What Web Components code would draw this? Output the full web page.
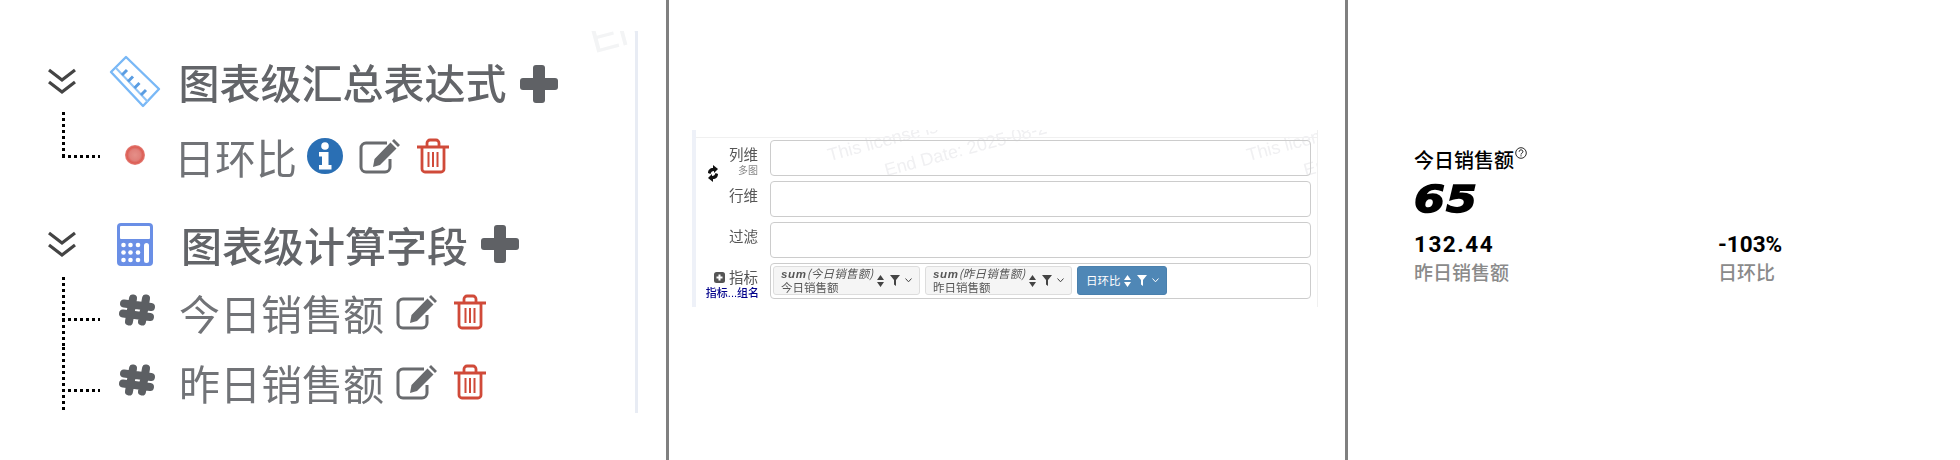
<!DOCTYPE html>
<html lang="zh"><head><meta charset="utf-8"><title>Chart fields</title>
<style>
html,body{margin:0;padding:0;background:#fff}
body{font-family:"Noto Sans CJK SC","Noto Sans",sans-serif}
</style></head><body>
<x-page>
  <tree-panel>
    <watermark-text size="42" x="597" y="-17" color="#f3f4f5" text="End Date"></watermark-text>
    <tree-head icon="ruler" style="--mt:22px;--mb:3px;--tx:1.500px;--addy:6px">图表级汇总表达式</tree-head>
    <tree-leaf icon="dot" h="88" vtop="0" vh="44" hy="43" style="--tx:-5px;--icx:-2px;--am:10px;--icy:2px" actions="info edit trash">日环比</tree-leaf>
    <tree-head icon="calc" style="--mt:16px;--mb:5px;--tx:4px">图表级计算字段</tree-head>
    <tree-leaf icon="hash" h="70" vh="70" hy="41" style="--icy:4px;--am:12px" actions="edit trash">今日销售额</tree-leaf>
    <tree-leaf icon="hash" h="70" vh="63" hy="42" style="--icy:4px;--am:12px" actions="edit trash">昨日销售额</tree-leaf>
  </tree-panel>
  <x-rule></x-rule>
  <form-panel>
    <watermark-text size="18" x="135" y="15" text="This license is -"></watermark-text>
    <watermark-text size="18" x="192" y="30" text="End Date: 2025-08-2"></watermark-text>
    <watermark-text size="18" x="554" y="15" text="This license is -"></watermark-text>
    <watermark-text size="18" x="611" y="30" text="End Date: 2025-08-2"></watermark-text>
    <field-row>
      <x-icon name="sync" w="12" h="17" slot="lead"></x-icon>
      <span slot="label">列维</span><small slot="sub">多图</small>
    </field-row>
    <field-row><span slot="label">行维</span></field-row>
    <field-row><span slot="label">过滤</span></field-row>
    <field-row>
      <span slot="label"><x-icon name="plussq" w="11" h="11"></x-icon> 指标</span>
      <b slot="sub" class="blue">指标...组名</b>
      <field-chip w="147" top="今日销售额" bottom="今日销售额"></field-chip>
      <field-chip w="147" top="昨日销售额" bottom="昨日销售额"></field-chip>
      <field-chip w="90" active bottom="日环比"></field-chip>
    </field-row>
  </form-panel>
  <x-rule></x-rule>
  <kpi-panel></kpi-panel>
</x-page>
<script>
const ICONS={
 plus:[40,40,'<rect x="14" y="1" width="12" height="38" rx="3" fill="#5f6165"/><rect x="1" y="14" width="38" height="12" rx="3" fill="#5f6165"/>'],
 chev:[32,28,'<path d="M3 3 16 13 29 3M3 15 16 25 29 15" fill="none" stroke="#444" stroke-width="3.200"/>'],
 ruler:[54,54,'<path d="M19 3 4 18 36 52 52 35Z" fill="#fff" stroke="#79b8f6" stroke-width="2.400" stroke-linejoin="round"/><path d="M9 14 41 48" stroke="#8fc4f7" stroke-width="2"/><path d="M15 21 20 16M21 27.500 26 22.500M27.500 34 32.500 29M34 41 39 36" fill="none" stroke="#5a9de2" stroke-width="3"/>'],
 calc:[36,43,'<rect x="0" y="0" width="36" height="43" rx="4" fill="#6a8fe6"/><rect x="3" y="3" width="30" height="13" rx="1" fill="#fff"/><g fill="#fff"><circle cx="6.500" cy="22" r="2.300"/><circle cx="13.500" cy="22" r="2.300"/><circle cx="21" cy="22" r="2.300"/><circle cx="6.500" cy="29.500" r="2.300"/><circle cx="13.500" cy="29.500" r="2.300"/><circle cx="21" cy="29.500" r="2.300"/><circle cx="6.500" cy="37" r="2.300"/><circle cx="13.500" cy="37" r="2.300"/><circle cx="21" cy="37" r="2.300"/><rect x="27" y="20" width="5" height="20" rx="2.500"/></g>'],
 dot:[22,22,'<defs><radialGradient id="d"><stop offset="0" stop-color="#e58f88"/><stop offset=".55" stop-color="#e0807a"/><stop offset=".8" stop-color="#dc5d54"/><stop offset="1" stop-color="#e6827b"/></radialGradient></defs><circle cx="11" cy="11" r="10" fill="url(#d)"/>'],
 hash:[38,34,'<g fill="none" stroke="#5c5f63" stroke-width="8" stroke-linecap="round"><path d="M15 5.500 11 28.500M28 5.500 24 28.500M6 10.500 33 14M5 20.500 32 24"/></g>'],
 info:[36,36,'<circle cx="18" cy="18" r="18" fill="#2a6fb4"/><circle cx="18" cy="8" r="3.800" fill="#fff"/><path d="M12 14h9.500v13h3v4.500H12V27h3v-8.500h-3z" fill="#fff"/>'],
 edit:[42,36,'<path d="M31 21v8a5 5 0 0 1-5 5H7a5 5 0 0 1-5-5V10a5 5 0 0 1 5-5h21" fill="none" stroke="#696b6e" stroke-width="3"/><path d="M35 1l6 6-2 2-6-6zM31.500 4.500l6 6L21 27l-7 2 1.500-8z" fill="#696b6e"/>'],
 trash:[32,36,'<g fill="none" stroke="#d04a39" stroke-width="2.800"><path d="M0 9H32M10 9V5a3 3 0 0 1 3-3h6a3 3 0 0 1 3 3v4M5 9v22a3 3 0 0 0 3 3h16a3 3 0 0 0 3-3V9"/><path d="M11.500 14v15M16 14v15M20.500 14v15" stroke-width="2"/></g>'],
 sync:[12,17,'<path d="M1 8C1 5 3 3 6 3V0l5 4-4 4V6C5 6 4 7 3.500 9ZM11 9c0 3-2 5-5 5v3l-5-4 4-4v2c2 0 3-1 3.500-3Z" fill="#111"/>'],
 plussq:[11,11,'<rect width="11" height="11" rx="2.500" fill="#555"/><path d="M5.500 2.500v6M2.500 5.500h6" stroke="#fff" stroke-width="2"/>'],
 sort:[7,12,'<path d="M3.500 0 7 5H0ZM3.500 12 0 7H7Z" fill="currentColor"/>'],
 funnel:[10,11,'<path d="M0 0H10L6 5V11L4 9.500V5Z" fill="currentColor"/>'],
 caret:[7,5,'<path d="M.5.500 3.500 3.800 6.500.500" fill="none" stroke="currentColor" stroke-width="1"/>'],
 help:[12,12,'<circle cx="6" cy="6" r="5.300" fill="none" stroke="#111" stroke-width=".9"/><path d="M4.200 4.700c0-2.400 3.700-2.400 3.700 0 0 1.400-1.900 1.300-1.900 2.800M6 8.300v1.100" fill="none" stroke="#111" stroke-width="1"/>']
};
function def(name,css,html,init){
  customElements.define(name,class extends HTMLElement{
    connectedCallback(){
      if(this.shadowRoot)return;
      const r=this.attachShadow({mode:'open'});
      r.innerHTML='<style>'+css+'</style>'+(typeof html==='function'?html(this):html);
      if(init)init(this,r);
    }
  });
}
def('x-icon',':host{display:inline-flex;flex:none;line-height:0}svg{display:block}',h=>{
  const [w,ht,b]=ICONS[h.getAttribute('name')];
  const W=h.getAttribute('w')||w,H=h.getAttribute('h')||ht;
  return `<svg xmlns="http://www.w3.org/2000/svg" width="${W}" height="${H}" viewBox="0 0 ${w} ${ht}">${b}</svg>`;
});
def('x-page',':host{display:flex;width:1960px;height:460px;overflow:hidden;background:#fff}','<slot></slot>');
def('x-rule',':host{display:block;flex:none;width:3px;height:460px;background:#808080}','');
def('watermark-text',':host{position:absolute;left:var(--x);top:var(--y);color:var(--c);font:var(--s)/1.200 "Liberation Sans",sans-serif;transform:rotate(-15deg);transform-origin:left bottom;white-space:nowrap;pointer-events:none;z-index:0}',h=>{
  h.style.setProperty('--x',h.getAttribute('x')+'px');
  h.style.setProperty('--y',h.getAttribute('y')+'px');
  h.style.setProperty('--s',h.getAttribute('size')+'px');
  h.style.setProperty('--c',h.getAttribute('color')||'#f0f0f2');
  return h.getAttribute('text');
});
def('tree-panel',`:host{display:block;flex:none;width:666px;height:460px;box-sizing:border-box;padding-top:31px;filter:blur(.45px)}
.box{position:relative;width:638px;height:382px;box-sizing:border-box;border-right:3px solid #e8ecf4;overflow:hidden}`,'<div class="box"><slot></slot></div>');
def('tree-head',`:host{display:flex;align-items:center;height:56px;margin-top:var(--mt);margin-bottom:var(--mb);padding-left:46px;font-size:41px;font-weight:500;color:#636569;white-space:nowrap;position:relative;z-index:1}
.ic{width:74px;margin-left:20px;display:flex;justify-content:center;margin-right:5px}
.ic.r{position:relative;left:-1px}
.tx{margin-left:var(--tx,0px)}
.add{margin-left:12px;margin-top:var(--addy,0px)}`,h=>`<x-icon class="ch" name="chev"></x-icon><span class="ic ${h.getAttribute('icon')==='ruler'?'r':''}"><x-icon name="${h.getAttribute('icon')}"></x-icon></span><span class="tx"><slot></slot></span><x-icon class="add" name="plus"></x-icon>`);
def('tree-leaf',`:host{display:flex;align-items:center;padding-left:62px;font-size:41px;font-weight:400;color:#717377;white-space:nowrap;position:relative;z-index:1}
.c{width:38px;align-self:stretch;flex:none;background-repeat:no-repeat}
.ic{width:74px;display:flex;justify-content:center;margin-right:5px;margin-bottom:var(--icy,0px)}
.ic x-icon{margin-left:calc(var(--icx,0px)*2)}
.tx{margin-left:var(--tx,0px)}
.acts{display:flex;align-items:center;gap:16px;margin-left:var(--am,13px)}`,h=>{
  const H=+h.getAttribute('h'),vh=h.getAttribute('vh'),hy=h.getAttribute('hy');
  h.style.height=H+'px';
  const acts=h.getAttribute('actions').split(' ').map(n=>`<x-icon name="${n}"></x-icon>`).join('');
  return `<div class="c" style="background-image:repeating-linear-gradient(to bottom,#000 0 3px,transparent 3px 6px),repeating-linear-gradient(to right,#000 0 3px,transparent 3px 6px);background-size:3px ${vh}px,38px 3px;background-position:0 0,0 ${hy}px"></div><span class="ic"><x-icon name="${h.getAttribute('icon')}"></x-icon></span><span class="tx"><slot></slot></span><span class="acts">${acts}</span>`;
});
def('form-panel',`:host{display:block;flex:none;width:676px;height:460px;padding:130px 0 0 23px;box-sizing:border-box;filter:blur(.25px)}
.form{position:relative;width:626px;height:177px;box-sizing:border-box;border-left:4px solid #eef1f8;border-right:1px solid #f0f0f0;overflow:hidden;padding-top:10px}
.top{position:absolute;left:0;right:0;top:7px;height:1px;background:#f0f0f0}
.rows{display:flex;flex-direction:column;gap:5px;position:relative;z-index:1}`,'<div class="form"><div class="top"></div><slot></slot><div class="rows"><slot name="rows"></slot></div></div>',(h,r)=>{
  [...h.children].forEach(c=>{if(c.localName==='field-row')c.slot='rows'});
});
def('field-row',`:host{display:flex;height:36px;font-size:14.500px;color:#555;font-family:"Liberation Sans","Noto Sans CJK SC",sans-serif}
.lab{width:74px;flex:none;box-sizing:border-box;padding-right:12px;display:flex;align-items:flex-start;position:relative}
.lead{position:absolute;left:11px;top:25px;line-height:0}
.txt{margin-left:auto;padding-top:7px;display:flex;flex-direction:column;align-items:flex-end;line-height:17px;white-space:nowrap}
::slotted(small){font-size:10px;color:#888;line-height:13px}
::slotted(.blue){font-size:11px;color:#00008b;line-height:13px;font-weight:500;margin-right:-1px}
.box{flex:none;width:541px;height:36px;box-sizing:border-box;border:1px solid #ccc;border-radius:4px;display:flex;gap:5px;padding:2px;font-family:"Noto Sans CJK SC",sans-serif}`,
'<div class="lab"><span class="lead"><slot name="lead"></slot></span><span class="txt"><slot name="label"></slot><slot name="sub"></slot></span></div><div class="box"><slot></slot></div>');
def('field-chip',`:host{display:flex;align-items:center;height:29px;box-sizing:border-box;border:1px solid #ddd;border-radius:3px;background:#f5f5f5;color:#555;padding-left:7px;font-size:11.500px;line-height:13.500px;white-space:nowrap}
:host([active]){background:#4f87b6;border-color:#4a80ad;color:#fff;padding-left:8px}
.t{flex:1;min-width:0}
.s{font-style:italic;display:block;letter-spacing:.2px}
.s b{font-family:"Liberation Sans",sans-serif;font-size:11.500px;letter-spacing:.7px}
.i{display:flex;align-items:center;padding-right:7px;color:#444}
.i x-icon:nth-child(2){margin:0 5px 0 6px}
:host([active]) .i{color:#fff}`,h=>{
  h.style.width=h.getAttribute('w')+'px';
  const top=h.getAttribute('top');
  return `<div class="t">${top?`<span class="s"><b>sum</b>(${top})</span>`:''}${h.getAttribute('bottom')}</div><div class="i"><x-icon name="sort"></x-icon><x-icon name="funnel"></x-icon><x-icon name="caret"></x-icon></div>`;
});
def('kpi-panel',`:host{display:block;flex:1;box-sizing:border-box;padding:146px 0 0 66px;color:#000}
.t{display:flex;font-size:20px;font-weight:500;line-height:28px;height:28px}
.t x-icon{margin:1px 0 0 1px}
.v{font:italic 700 37px/40px "DejaVu Sans",sans-serif;margin-top:6px;height:40px;-webkit-text-stroke:1.500px #000;letter-spacing:1px;width:max-content;transform:scaleX(1.2);transform-origin:left}
.g{display:grid;grid-template-columns:304px 1fr;margin-top:11px}
.n{font:700 22.500px/26px Roboto,sans-serif}
.n.w{letter-spacing:1.500px}
.l{font-size:19px;line-height:28px;color:#8a8a8a;font-weight:500;margin-top:1px}`,
`<div class="t">今日销售额<x-icon name="help"></x-icon></div><div class="v">65</div><div class="g"><div><div class="n w">132.44</div><div class="l">昨日销售额</div></div><div><div class="n">-103%</div><div class="l">日环比</div></div></div>`);
</script>
</body></html>
